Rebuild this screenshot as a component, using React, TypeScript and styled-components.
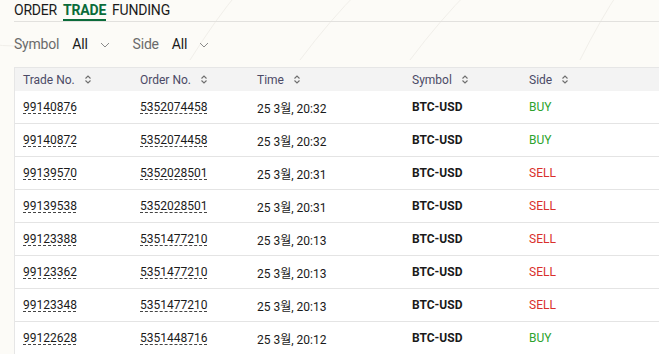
import React from "react";
import styled, { createGlobalStyle } from "styled-components";

const Global = createGlobalStyle`
  html, body { margin: 0; padding: 0; }
  body {
    background: #fcfbf7;
    font-family: Roboto, "Noto Sans", "Noto Sans CJK KR", sans-serif;
    overflow: hidden;
  }
`;

const Page = styled.div`
  position: relative;
  width: 659px;
  height: 354px;
  overflow: hidden;
  padding-left: 14px;
  box-sizing: border-box;
`;

const Backdrop = styled.svg`
  position: absolute;
  inset: 0;
  pointer-events: none;
`;

const Content = styled.div`
  position: relative;
  display: flex;
  flex-direction: column;
`;

const Tabs = styled.div`
  display: flex;
  gap: 6px;
  height: 21px;
  border-bottom: 1px solid #e2e1de;
  align-items: flex-start;
`;

const Tab = styled.div<{ $active?: boolean }>`
  font-size: 14px;
  line-height: 17px;
  padding-top: 2px;
  box-sizing: border-box;
  height: 21px;
  letter-spacing: -0.2px;
  color: ${(p) => (p.$active ? "#0b6b3a" : "#1a1a1a")};
  font-weight: ${(p) => (p.$active ? 700 : 400)};
  border-bottom: 2px solid ${(p) => (p.$active ? "#0b6b3a" : "transparent")};
`;

const Filters = styled.div`
  display: flex;
  align-items: center;
  height: 44px;
  gap: 23px;
`;

const Filter = styled.div`
  display: flex;
  align-items: center;
  font-size: 14px;
  letter-spacing: -0.2px;
`;

const FilterLabel = styled.span`
  color: #6b6b6b;
  margin-right: 13px;
`;

const FilterValue = styled.span`
  color: #1a1a1a;
  margin-right: 12px;
`;

const Chevron = () => (
  <svg width="10" height="6" viewBox="0 0 10 6" style={{ marginTop: 2 }}>
    <path d="M1 1l4 4 4-4" fill="none" stroke="#8a8a8a" strokeWidth="1" />
  </svg>
);

const Table = styled.div`
  margin-top: 1px;
  border-left: 1px solid #e6e6e6;
  border-top: 1px solid #e6e6e6;
  background: #ffffff;
  width: 660px;
`;

const Row = styled.div<{ $head?: boolean }>`
  display: grid;
  grid-template-columns: 117px 117px 155px 117px 1fr;
  align-items: center;
  height: ${(p) => (p.$head ? "23px" : "32px")};
  background: ${(p) => (p.$head ? "#f3f3f3" : "#ffffff")};
  border-bottom: ${(p) => (p.$head ? "none" : "1px solid #e4e4e4")};
  padding-left: 8px;
`;

const HeadCell = styled.div`
  display: flex;
  align-items: center;
  font-size: 12px;
  color: #4b4a66;
  gap: 9px;
`;

const Cell = styled.div<{ $bold?: boolean; $color?: string }>`
  font-size: 12px;
  color: ${(p) => p.$color || "#1a1a1a"};
  font-weight: ${(p) => (p.$bold ? 700 : 400)};
`;

const Link = styled.span`
  font-size: 12px;
  color: #1a1a1a;
  text-decoration: underline dashed #444;
  text-underline-offset: 2px;
  text-decoration-thickness: 1px;
`;

const SortIcon = () => (
  <svg width="8" height="11" viewBox="0 0 8 11">
    <path d="M1.5 4.5l2.5-2.5 2.5 2.5M1.5 6.5l2.5 2.5 2.5-2.5" fill="none" stroke="#6e6e6e" strokeWidth="1.1" />
  </svg>
);

const rows = [
  ["99140876", "5352074458", "25 3월, 20:32", "BUY"],
  ["99140872", "5352074458", "25 3월, 20:32", "BUY"],
  ["99139570", "5352028501", "25 3월, 20:31", "SELL"],
  ["99139538", "5352028501", "25 3월, 20:31", "SELL"],
  ["99123388", "5351477210", "25 3월, 20:13", "SELL"],
  ["99123362", "5351477210", "25 3월, 20:13", "SELL"],
  ["99123348", "5351477210", "25 3월, 20:13", "SELL"],
  ["99122628", "5351448716", "25 3월, 20:12", "BUY"],
];

const heads = ["Trade No.", "Order No.", "Time", "Symbol", "Side"];

export default function App() {
  return (
    <Page>
      <Global />
      <Backdrop width="659" height="354" viewBox="0 0 659 354">
        <g fill="none" stroke="#f1efea" strokeWidth="1">
          <path d="M-10 44 Q 15 48 40 44" />
          <path d="M190 60 Q 215 20 240 -10" />
          <path d="M300 60 Q 330 20 360 -10" />
          <path d="M410 60 Q 440 20 470 -10" />
          <path d="M580 60 Q 600 20 620 -10" />
        </g>
      </Backdrop>
      <Content>
        <Tabs>
          <Tab>ORDER</Tab>
          <Tab $active>TRADE</Tab>
          <Tab>FUNDING</Tab>
        </Tabs>
        <Filters>
          <Filter>
            <FilterLabel>Symbol</FilterLabel>
            <FilterValue>All</FilterValue>
            <Chevron />
          </Filter>
          <Filter>
            <FilterLabel>Side</FilterLabel>
            <FilterValue>All</FilterValue>
            <Chevron />
          </Filter>
        </Filters>
        <Table>
          <Row $head>
            {heads.map((h) => (
              <HeadCell key={h}>
                {h}
                <SortIcon />
              </HeadCell>
            ))}
          </Row>
          {rows.map((r) => (
            <Row key={r[0]}>
              <Cell><Link>{r[0]}</Link></Cell>
              <Cell><Link>{r[1]}</Link></Cell>
              <Cell>{r[2]}</Cell>
              <Cell $bold>BTC-USD</Cell>
              <Cell $color={r[3] === "BUY" ? "#2ea32e" : "#d9302c"}>{r[3]}</Cell>
            </Row>
          ))}
        </Table>
      </Content>
    </Page>
  );
}
